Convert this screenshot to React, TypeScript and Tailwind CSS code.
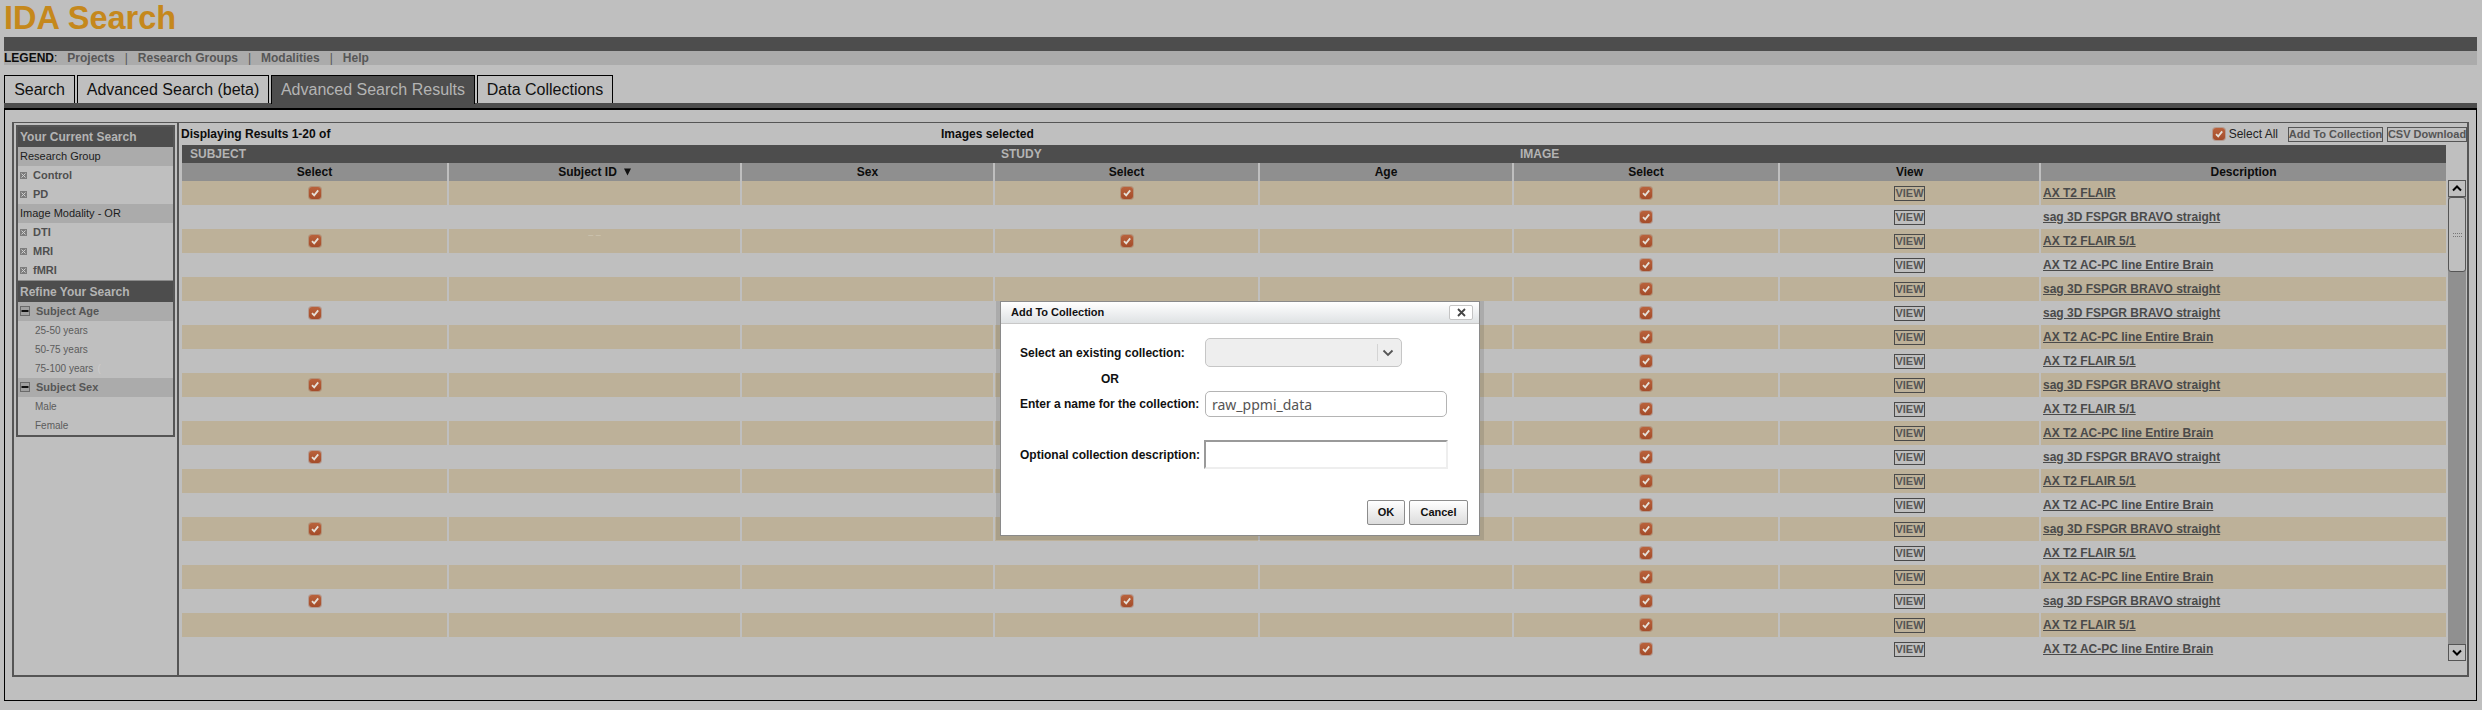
const sans = { fontFamily: '"Liberation Sans", Arial, sans-serif' };

const descriptions = [
  "AX T2 FLAIR",
  "sag 3D FSPGR BRAVO straight",
  "AX T2 FLAIR 5/1",
  "AX T2 AC-PC line Entire Brain",
  "sag 3D FSPGR BRAVO straight",
  "sag 3D FSPGR BRAVO straight",
  "AX T2 AC-PC line Entire Brain",
  "AX T2 FLAIR 5/1",
  "sag 3D FSPGR BRAVO straight",
  "AX T2 FLAIR 5/1",
  "AX T2 AC-PC line Entire Brain",
  "sag 3D FSPGR BRAVO straight",
  "AX T2 FLAIR 5/1",
  "AX T2 AC-PC line Entire Brain",
  "sag 3D FSPGR BRAVO straight",
  "AX T2 FLAIR 5/1",
  "AX T2 AC-PC line Entire Brain",
  "sag 3D FSPGR BRAVO straight",
  "AX T2 FLAIR 5/1",
  "AX T2 AC-PC line Entire Brain",
];

const subjectRows = [0, 2, 5, 8, 11, 14, 17];
const columns = ["Select", "Subject ID", "Sex", "Select", "Age", "Select", "View", "Description"];
const gridCols = "grid grid-cols-[265px_291px_251px_263px_252px_264px_259px_405px] gap-x-[2px]";

function Check() {
  return (
    <span className="inline-flex h-3 w-3 items-center justify-center rounded-[3px] bg-gradient-to-b from-[#b9623c] to-[#a44c2a] shadow-[0_0_0_1px_rgba(160,90,60,0.35)]">
      <svg width="10" height="10" viewBox="0 0 10 10">
        <path d="M2 5.2 L4.2 7.4 L8.2 2.4" fill="none" stroke="#e6e0d8" strokeWidth="1.8" />
      </svg>
    </span>
  );
}

function CrossBox() {
  return (
    <svg width="7" height="7" viewBox="0 0 7 7" className="shrink-0">
      <rect width="7" height="7" fill="#7d7d7d" />
      <path d="M1.5 1.5 L5.5 5.5 M5.5 1.5 L1.5 5.5" stroke="#d0d0d0" strokeWidth="1" />
    </svg>
  );
}

function MinusBox() {
  return (
    <svg width="10" height="10" viewBox="0 0 10 10" className="-mt-[2px] shrink-0">
      <rect x="0.5" y="0.5" width="9" height="9" fill="#a0a0a0" stroke="#6a6a6a" />
      <rect x="1.5" y="4" width="7" height="2" fill="#111" />
    </svg>
  );
}

function Sidebar() {
  const group = "flex h-[19px] items-center bg-[#ababab] pl-[2px] text-[11px] text-[#1c1c1c]";
  const item = "flex h-[19px] items-center gap-[6px] pl-[2px] text-[11px] font-bold text-[#4f4f4f]";
  const sub = "flex h-[19px] items-center pl-[17px] text-[10px] text-[#5c5c5c]";
  const refine = "flex h-[19px] items-center gap-[6px] bg-[#ababab] pl-[2px] text-[11px] font-bold text-[#565656]";
  const head = "flex items-center bg-[#4d4d4d] pl-[2px] text-[12px] font-bold text-[#b4b4b4]";
  return (
    <div className="w-[159px] shrink-0 self-start border-2 border-[#555]">
      <div className={head + " h-[20px]"}>Your Current Search</div>
      <div className={group}>Research Group</div>
      <div className={item}><CrossBox />Control</div>
      <div className={item}><CrossBox />PD</div>
      <div className={group}>Image Modality - OR</div>
      <div className={item}><CrossBox />DTI</div>
      <div className={item}><CrossBox />MRI</div>
      <div className={item}><CrossBox />fMRI</div>
      <div className="h-px bg-[#8a8a8a]" />
      <div className={head + " h-[21px]"}>Refine Your Search</div>
      <div className={refine}><MinusBox />Subject Age</div>
      <div className={sub}>25-50 years</div>
      <div className={sub}>50-75 years</div>
      <div className={sub}>75-100 years<span className="ml-1 text-[#cccccc]">(</span></div>
      <div className={refine}><MinusBox />Subject Sex</div>
      <div className={sub}>Male</div>
      <div className={sub}>Female</div>
    </div>
  );
}

function ResultsTable() {
  return (
    <div className="w-[2264px] shrink-0">
      <div className="grid h-[18px] grid-cols-[811px_519px_934px] items-center bg-[#4d4d4d] text-[12px] font-bold text-[#b4b4b4]">
        <span className="pl-2">SUBJECT</span>
        <span className="pl-2">STUDY</span>
        <span className="pl-2">IMAGE</span>
      </div>
      <div className={gridCols + " h-[18px] text-[12px] font-bold text-[#0c0c0c]"}>
        {columns.map((c, i) => (
          <div key={i} className="flex items-center justify-center bg-[#8f8f8f]">
            {c}
            {c === "Subject ID" && (
              <svg width="7" height="8" viewBox="0 0 7 8" className="ml-[7px]">
                <path d="M0 0.5 H7 L3.5 7.5 Z" fill="#111" />
              </svg>
            )}
          </div>
        ))}
      </div>
      {descriptions.map((d, i) => {
        const rowBg = i % 2 === 0 ? "bg-[#bdb199]" : "bg-[#bfbfbf]";
        const cell = "flex items-center justify-center " + rowBg;
        const ticked = subjectRows.includes(i);
        return (
          <div key={i} className={gridCols + " h-6"}>
            <div className={cell}>{ticked && <Check />}</div>
            <div className={cell}>
              {i === 2 && <span className="-mt-[10px] text-[9px] text-[#cfc6b4]">– –</span>}
            </div>
            <div className={cell} />
            <div className={cell}>{ticked && <Check />}</div>
            <div className={cell} />
            <div className={cell}><Check /></div>
            <div className={cell}>
              <span className="flex h-[15px] w-[31px] items-center justify-center border border-[#4a4a4a] text-[11px] font-bold text-[#555]">VIEW</span>
            </div>
            <div className={"flex items-center pl-[2px] text-[12px] font-bold text-[#4a4a4a] underline " + rowBg}>{d}</div>
          </div>
        );
      })}
    </div>
  );
}

function Scrollbar() {
  return (
    <div className="ml-[2px] flex h-[481px] w-[18px] flex-col self-end">
      <div className="flex h-[17px] items-center justify-center border border-[#555] bg-[#bfbfbf]">
        <svg width="10" height="7" viewBox="0 0 10 7">
          <path d="M1 5.5 L5 1.5 L9 5.5" fill="none" stroke="#000" strokeWidth="2" />
        </svg>
      </div>
      <div className="flex-1 bg-[#909090]">
        <div className="flex h-[75px] items-center justify-center rounded-[3px] border border-[#555] bg-[#bfbfbf]">
          <span className="h-[4px] w-[9px] border-y border-dotted border-[#777]" />
        </div>
      </div>
      <div className="flex h-[17px] items-center justify-center border border-[#555] bg-[#bfbfbf]">
        <svg width="10" height="7" viewBox="0 0 10 7">
          <path d="M1 1.5 L5 5.5 L9 1.5" fill="none" stroke="#000" strokeWidth="2" />
        </svg>
      </div>
    </div>
  );
}

function Modal() {
  const label = "w-[185px] shrink-0 whitespace-nowrap text-[12px] font-bold text-[#111]";
  const btn =
    "h-[25px] rounded-[2px] border border-[#8c8c8c] bg-gradient-to-b from-white to-[#dcdcdc] text-[11px] font-bold text-[#111]";
  return (
    <>
      <div className="absolute top-[301px] left-[996px] h-[239px] w-[488px] bg-black/10" />
      <div className="absolute top-[301px] left-[1000px] h-[235px] w-[480px] border border-[#8a8a8a] bg-white">
        <div className="flex h-[22px] items-center justify-between border-b border-[#c8c8c8] bg-gradient-to-b from-white to-[#dfe2e4] pr-[6px] pl-[10px]">
          <span className="text-[11px] font-bold text-[#111]">Add To Collection</span>
          <span className="flex h-[15px] w-[24px] items-center justify-center rounded-[2px] border border-[#c4c4c4] bg-white">
            <svg width="9" height="9" viewBox="0 0 9 9">
              <path d="M1 1 L8 8 M8 1 L1 8" stroke="#444" strokeWidth="1.8" />
            </svg>
          </span>
        </div>
        <div className="pt-[14px] pl-[19px]">
          <div className="flex h-[29px] items-center">
            <span className={label}>Select an existing collection:</span>
            <div className="flex h-[29px] w-[197px] items-center justify-end rounded-[5px] border border-[#c6c6c6] bg-[#eeeeee]">
              <span className="mr-[4px] flex h-[17px] w-[20px] items-center justify-center border-l border-[#d4d4d4]">
                <svg width="12" height="8" viewBox="0 0 12 8">
                  <path d="M1.5 1.5 L6 6 L10.5 1.5" fill="none" stroke="#555" strokeWidth="1.8" />
                </svg>
              </span>
            </div>
          </div>
          <div className="flex h-[24px] items-center pl-[81px] text-[12px] font-bold text-[#111]">OR</div>
          <div className="flex h-[26px] items-center">
            <span className={label}>Enter a name for the collection:</span>
            <div
              className="flex h-[26px] w-[242px] items-center rounded-[5px] border border-[#b4b4b4] bg-white pl-[6px] text-[14px] text-[#555]"
              style={{ fontFamily: '"Noto Sans", sans-serif' }}
            >
              raw_ppmi_data
            </div>
          </div>
          <div className="mt-[23px] flex h-[29px] items-center">
            <span className="w-[184px] shrink-0 whitespace-nowrap text-[12px] font-bold text-[#111]">Optional collection description:</span>
            <div className="h-[29px] w-[244px] border-2 border-t-[#9a9a9a] border-r-[#eeeeee] border-b-[#eeeeee] border-l-[#9a9a9a] bg-white" />
          </div>
          <div className="mt-[31px] flex justify-end gap-[4px] pr-[11px]">
            <button className={btn + " w-[38px]"}>OK</button>
            <button className={btn + " w-[59px]"}>Cancel</button>
          </div>
        </div>
      </div>
    </>
  );
}

export default function App() {
  const tab =
    "flex h-[28px] items-center justify-center whitespace-nowrap border border-b-0 border-black bg-[#bfbfbf] text-[16px] text-[#111]";
  return (
    <div className="relative h-[710px] w-[2482px] overflow-hidden bg-[#bfbfbf]" style={sans}>
      <div className="h-[37px] pl-[4px] text-[32.5px] leading-[37px] font-bold text-[#c5881c]">IDA Search</div>
      <div className="mr-[5px] ml-1 h-[14px] bg-[#4d4d4d]" />
      <div className="mr-[5px] ml-1 flex h-[14px] items-center bg-[#ababab] text-[12px] text-[#565656]">
        <span className="text-[#0c0c0c]"><b>LEGEND</b>:</span>
        <b className="ml-[10px]">Projects</b>
        <span className="mx-[10px]">|</span>
        <b>Research Groups</b>
        <span className="mx-[10px]">|</span>
        <b>Modalities</b>
        <span className="mx-[10px]">|</span>
        <b>Help</b>
      </div>
      <div className="mt-[10px] ml-1 flex gap-[2px]">
        <div className={tab + " w-[71px]"}>Search</div>
        <div className={tab + " w-[192px]"}>Advanced Search (beta)</div>
        <div className="flex h-[29px] w-[204px] items-center justify-center whitespace-nowrap border border-b-0 border-black bg-[#4d4d4d] text-[16px] text-[#b4b4b4]">
          Advanced Search Results
        </div>
        <div className={tab + " w-[136px]"}>Data Collections</div>
      </div>
      <div className="mr-[5px] ml-1 -mt-px h-[5px] bg-[#4d4d4d]" />
      <div className="mr-[5px] ml-1 flex h-[593px] flex-col border border-t-2 border-black px-[7px] pt-[12px]">
        <div className="flex h-[555px] border-2 border-t-[1px] border-[#555]">
          <div className="flex w-[165px] shrink-0 border-r-2 border-[#555] pt-[2px] pl-[2px]">
            <Sidebar />
          </div>
          <div className="min-w-0 flex-1 pl-[2px]">
            <div className="relative flex h-[22px] items-center text-[12px]">
              <b className="text-[#0c0c0c]">Displaying Results 1-20 of</b>
              <b className="absolute left-[760px] text-[#0c0c0c]">Images selected</b>
              <div className="absolute right-[0px] flex items-center text-[12px]">
                <Check />
                <span className="mr-[10px] ml-[4px] text-[#222]">Select All</span>
                <span className="mr-[4px] flex h-[15px] w-[95px] items-center justify-center whitespace-nowrap border border-[#555] text-[11px] font-bold text-[#555]">Add To Collection</span>
                <span className="flex h-[15px] w-[80px] items-center justify-center whitespace-nowrap border border-[#555] text-[11px] font-bold text-[#555]">CSV Download</span>
              </div>
            </div>
            <div className="flex pl-[1px]">
              <ResultsTable />
              <Scrollbar />
            </div>
          </div>
        </div>
      </div>
      <Modal />
    </div>
  );
}
